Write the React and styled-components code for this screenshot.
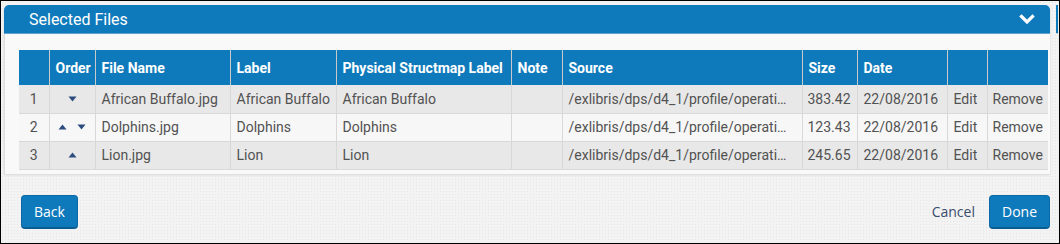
import React from "react";
import styled, { createGlobalStyle } from "styled-components";

const files = [
  { n: 1, up: false, down: true, name: "African Buffalo.jpg", label: "African Buffalo", size: "383.42" },
  { n: 2, up: true, down: true, name: "Dolphins.jpg", label: "Dolphins", size: "123.43" },
  { n: 3, up: true, down: false, name: "Lion.jpg", label: "Lion", size: "245.65" },
];

const columns = [
  { title: "", width: 30 },
  { title: "Order", width: 46 },
  { title: "File Name", width: 135 },
  { title: "Label", width: 106 },
  { title: "Physical Structmap Label", width: 175 },
  { title: "Note", width: 51 },
  { title: "Source", width: 240 },
  { title: "Size", width: 55 },
  { title: "Date", width: 90 },
  { title: "", width: 40 },
  { title: "", width: 61 },
];

const Arrow = ({ dir }) => (
  <ArrowIcon width="9" height="6" viewBox="0 0 9 6">
    {dir === "up" ? (
      <polygon points="0.5,5.5 4.5,0.5 8.5,5.5" />
    ) : (
      <polygon points="0.5,0.5 8.5,0.5 4.5,5.5" />
    )}
  </ArrowIcon>
);

const App = () => {
  return (
    <>
      <GlobalStyle />
      <Frame>
        <TopArea>
          <Panel>
            <PanelHeader>
              <h1>Selected Files</h1>
              <svg width="16" height="11" viewBox="0 0 16 11">
                <polyline
                  points="2.5,2.5 8,8 13.5,2.5"
                  fill="none"
                  stroke="#fff"
                  strokeWidth="3.2"
                  strokeLinecap="square"
                />
              </svg>
            </PanelHeader>
            <PanelBody>
              <Table>
                <thead>
                  <tr>
                    {columns.map((c, i) => (
                      <Th key={i} $w={c.width}>
                        {c.title}
                      </Th>
                    ))}
                  </tr>
                </thead>
                <tbody>
                  {files.map((f) => (
                    <Row key={f.n} $odd={f.n % 2 === 1}>
                      <Td $center>{f.n}</Td>
                      <Td $center>
                        <Arrows>
                          {f.up && <Arrow dir="up" />}
                          {f.down && <Arrow dir="down" />}
                        </Arrows>
                      </Td>
                      <Td>{f.name}</Td>
                      <Td>{f.label}</Td>
                      <Td>{f.label}</Td>
                      <Td></Td>
                      <Td>/exlibris/dps/d4_1/profile/operati…</Td>
                      <Td $tight>{f.size}</Td>
                      <Td>22/08/2016</Td>
                      <Td>Edit</Td>
                      <Td $tight>Remove</Td>
                    </Row>
                  ))}
                </tbody>
              </Table>
            </PanelBody>
          </Panel>
          <Edge />
        </TopArea>
        <Footer>
          <Button>Back</Button>
          <Spacer />
          <LinkButton>Cancel</LinkButton>
          <Button>Done</Button>
        </Footer>
      </Frame>
    </>
  );
};

const GlobalStyle = createGlobalStyle`
  html, body {
    margin: 0;
    padding: 0;
  }
  body {
    font-family: Roboto, "Liberation Sans", sans-serif;
  }
`;

const Frame = styled.div`
  width: 1060px;
  height: 244px;
  box-sizing: border-box;
  border: 1px solid #000;
  display: flex;
  flex-direction: column;
  background-color: #f3f3f3;
  background-image: radial-gradient(#e6e6e6 0.7px, transparent 0.8px);
  background-size: 3px 3px;
`;

const TopArea = styled.div`
  display: flex;
  padding: 4px 0 0 3px;
`;

const Panel = styled.div`
  width: 1046px;
  box-sizing: border-box;
  display: flex;
  flex-direction: column;
  box-shadow: 0 1px 2px rgba(0, 0, 0, 0.12);
`;

const PanelHeader = styled.div`
  height: 28px;
  display: flex;
  align-items: center;
  justify-content: space-between;
  padding: 0 15px 0 25px;
  background-color: #0f7abb;
  border-radius: 5px 5px 0 0;
  border-bottom: 1px solid #5ea3cf;
  h1 {
    margin: 0;
    font-size: 16px;
    font-weight: 400;
    color: #fff;
  }
  svg {
    margin-top: 1px;
  }
`;

const PanelBody = styled.div`
  background-color: #f9f9f9;
  border-left: 1px solid #dcdcdc;
  padding: 16px 0 4px 14px;
`;

const Edge = styled.div`
  margin-left: auto;
  margin-right: 1px;
  width: 2px;
  height: 28px;
  background-color: #0f7abb;
  border-bottom: 1px solid #d0d0d0;
`;

const Table = styled.table`
  width: 1029px;
  table-layout: fixed;
  border-collapse: collapse;
  font-size: 14px;
`;

const Th = styled.th`
  width: ${(p) => p.$w}px;
  height: 35px;
  box-sizing: border-box;
  padding: 0 6px;
  text-align: left;
  font-weight: 700;
  color: #fff;
  background-color: #0f7abb;
  border-left: 1px solid #c9c9c9;
  white-space: nowrap;
  &:first-child {
    border-left: none;
  }
`;

const Row = styled.tr`
  background-color: ${(p) => (p.$odd ? "#e8e8e8" : "#f7f7f7")};
`;

const Td = styled.td`
  height: 28px;
  box-sizing: border-box;
  padding: ${(p) => (p.$tight ? "0 0 0 5px" : "0 6px")};
  color: #525252;
  text-align: ${(p) => (p.$center ? "center" : "left")};
  border: 1px solid #d8d8d8;
  border-top: none;
  white-space: nowrap;
  overflow: hidden;
  &:first-child {
    border-left: none;
  }
  &:last-child {
    border-right: none;
  }
`;

const Arrows = styled.div`
  display: flex;
  justify-content: center;
  align-items: center;
  gap: 10px;
`;

const ArrowIcon = styled.svg`
  fill: #2c4c80;
  display: block;
`;

const Footer = styled.div`
  display: flex;
  align-items: flex-start;
  padding: 21px 9px 0 20px;
`;

const Spacer = styled.div`
  flex: 1;
`;

const Button = styled.button`
  height: 34px;
  padding: 0 12px;
  font-family: "Open Sans", "Liberation Sans", sans-serif;
  font-size: 14px;
  color: #fff;
  background-color: #0f7abb;
  border: 1px solid #0b6aa5;
  border-bottom: 2px solid #0a5d90;
  border-radius: 4px;
`;

const LinkButton = styled.span`
  font-family: "Open Sans", "Liberation Sans", sans-serif;
  font-size: 14px;
  color: #3a4c6e;
  line-height: 34px;
  margin-right: 14px;
`;

export default App;
